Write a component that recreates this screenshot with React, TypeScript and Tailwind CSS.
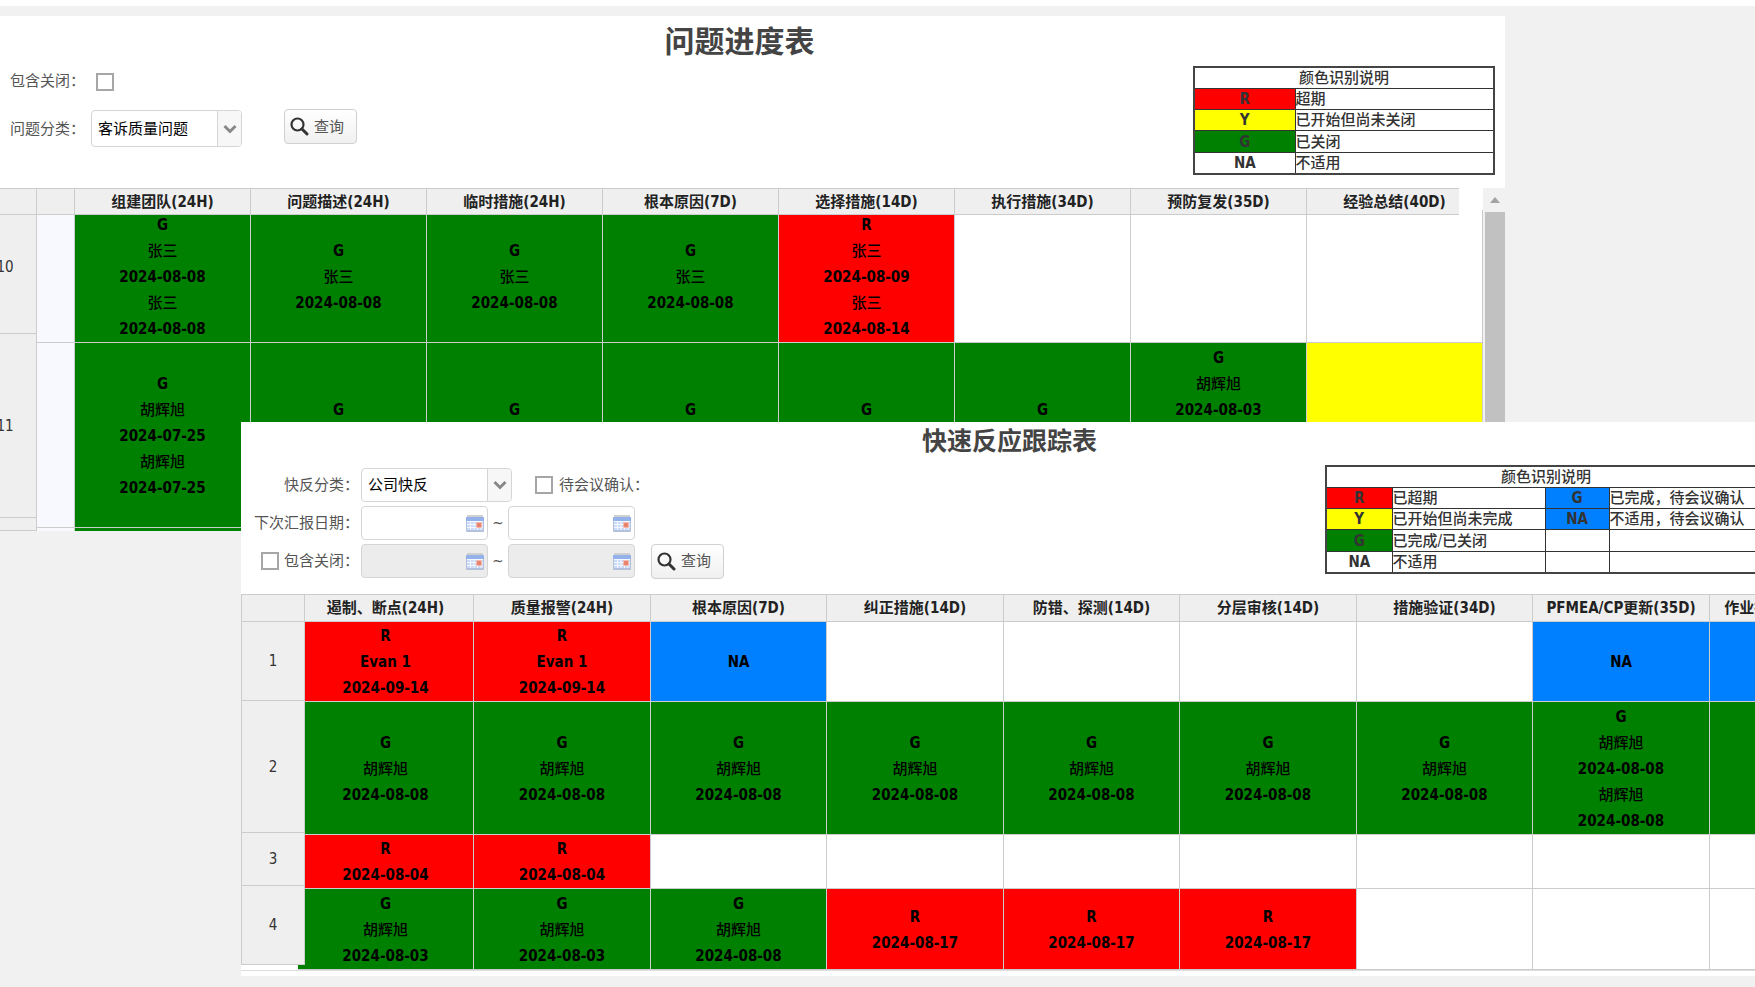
import React from "react";

type Status = "R" | "Y" | "G" | "B" | "";

interface CellData {
  status: Status;
  lines: string[];
}

interface RowData {
  height: string;
  cells: CellData[];
}

const statusColor: Record<Status, string> = {
  R: "bg-[#ff0000]",
  Y: "bg-[#ffff00]",
  G: "bg-[#008000]",
  B: "bg-[#0080ff]",
  "": "bg-white",
};

const empty: CellData = { status: "", lines: [] };

const cell = (status: Status, ...lines: string[]): CellData => ({
  status,
  lines,
});

const issueColumns = [
  "组建团队(24H)",
  "问题描述(24H)",
  "临时措施(24H)",
  "根本原因(7D)",
  "选择措施(14D)",
  "执行措施(34D)",
  "预防复发(35D)",
  "经验总结(40D)",
];

const zhang = cell("G", "G", "张三", "2024-08-08");
const hu = cell("G", "G", "胡辉旭", "2024-08-08");
const huTwice = cell("G", "G", "胡辉旭", "2024-07-25", "胡辉旭", "2024-07-25");
// name and date not filled in, the lines keep their room
const codeOnly = cell("G", "G", "", "");

const issueRows: RowData[] = [
  {
    height: "h-[133px]",
    cells: [
      cell("G", "G", "张三", "2024-08-08", "张三", "2024-08-08"),
      zhang,
      zhang,
      zhang,
      cell("R", "R", "张三", "2024-08-09", "张三", "2024-08-14"),
      empty,
      empty,
      empty,
    ],
  },
  {
    height: "h-[185px]",
    cells: [
      huTwice,
      codeOnly,
      codeOnly,
      codeOnly,
      codeOnly,
      codeOnly,
      cell("G", "G", "胡辉旭", "2024-08-03", "", "", "", ""),
      cell("Y"),
    ],
  },
  {
    height: "h-[4px]",
    cells: Array.from({ length: 8 }, () => cell("G")),
  },
];

const trackColumns = [
  "遏制、断点(24H)",
  "质量报警(24H)",
  "根本原因(7D)",
  "纠正措施(14D)",
  "防错、探测(14D)",
  "分层审核(14D)",
  "措施验证(34D)",
  "PFMEA/CP更新(35D)",
  "作业指导书更新(35D)",
];

const trackColumnWidths = [
  "w-[176px]",
  "w-[177px]",
  "w-[176px]",
  "w-[177px]",
  "w-[176px]",
  "w-[177px]",
  "w-[176px]",
  "w-[177px]",
  "w-[177px]",
];

const evan = cell("R", "R", "Evan 1", "2024-09-14");
const overdue = cell("R", "R", "2024-08-17");

const trackRows: RowData[] = [
  {
    height: "h-[80px]",
    cells: [
      evan,
      evan,
      cell("B", "NA"),
      empty,
      empty,
      empty,
      empty,
      cell("B", "NA"),
      cell("B", "NA"),
    ],
  },
  {
    height: "h-[133px]",
    cells: [
      hu,
      hu,
      hu,
      hu,
      hu,
      hu,
      hu,
      cell("G", "G", "胡辉旭", "2024-08-08", "胡辉旭", "2024-08-08"),
      hu,
    ],
  },
  {
    height: "h-[54px]",
    cells: [
      cell("R", "R", "2024-08-04"),
      cell("R", "R", "2024-08-04"),
      empty,
      empty,
      empty,
      empty,
      empty,
      empty,
      empty,
    ],
  },
  {
    height: "h-[81px]",
    cells: [
      cell("G", "G", "胡辉旭", "2024-08-03"),
      cell("G", "G", "胡辉旭", "2024-08-03"),
      hu,
      overdue,
      overdue,
      overdue,
      empty,
      empty,
      empty,
    ],
  },
];

const headCell =
  "h-[27px] border-r border-b border-[#ccc] bg-[#efefef] p-0 text-center font-bold whitespace-nowrap text-[#222]";

function BodyCell({ data }: { data: CellData }) {
  return (
    <td
      className={`border-r border-b border-[#ccc] p-0 pt-px text-center align-middle leading-[26px] font-bold text-black ${statusColor[data.status]}`}
    >
      {data.lines.map((line, index) => (
        <div
          key={index}
          className={`h-[26px] ${
            /[\u4e00-\u9fff]/.test(line) ? "font-medium" : ""
          }`}
        >
          {line}
        </div>
      ))}
    </td>
  );
}

function SearchButton() {
  return (
    <button className="flex h-[35px] w-[73px] items-center gap-[5px] rounded border border-[#d0d0d0] bg-linear-to-b from-white to-[#f0f0f0] pl-[5px] text-[#555]">
      <svg width="19" height="19" viewBox="0 0 19 19" fill="none">
        <circle cx="7.5" cy="7.5" r="6" stroke="#333" strokeWidth="2.2" />
        <path
          d="M12 12l5 5"
          stroke="#333"
          strokeWidth="3"
          strokeLinecap="round"
        />
      </svg>
      查询
    </button>
  );
}

function Select({
  id,
  value,
  className,
}: {
  id: string;
  value: string;
  className: string;
}) {
  return (
    <div
      className={`relative flex w-[151px] overflow-hidden rounded border border-[#d5d5d5] bg-white ${className}`}
    >
      <select
        id={id}
        className="w-full appearance-none bg-transparent pl-[6px] text-black"
      >
        <option>{value}</option>
      </select>
      <span className="pointer-events-none flex w-6 shrink-0 items-center justify-center border-l border-[#d5d5d5] bg-[#f7f7f7]">
        <svg width="14" height="10" viewBox="0 0 14 10" fill="none">
          <path d="M1.5 2L7 7.5L12.5 2" stroke="#888" strokeWidth="3" />
        </svg>
      </span>
    </div>
  );
}

function CalendarIcon() {
  return (
    <svg
      width="18"
      height="17"
      viewBox="0 0 18 17"
      className="pointer-events-none shrink-0"
    >
      <path d="M1 1h16" stroke="#cfcfcf" strokeWidth="2" />
      <rect x="0" y="2" width="18" height="15" rx="1" fill="#b3c1dd" />
      <rect x="0" y="2" width="18" height="4" fill="#93b1ea" />
      <rect x="1" y="6" width="16" height="9" fill="#c9d9f6" />
      <path
        d="M1 6.500h16M1 9.500h16M1 12.500h16M4.500 6v9M8 6v9M11.500 6v9M15 6v9"
        stroke="#f3f7ff"
        strokeWidth="1"
      />
      <rect x="10" y="7" width="6" height="6" rx="1" fill="#f3b9ac" />
      <rect x="11" y="8" width="4" height="4" rx="1" fill="#e9826c" />
    </svg>
  );
}

function DateInput({ label, disabled }: { label: string; disabled?: boolean }) {
  return (
    <div
      className={`flex h-[34px] w-[127px] items-center rounded border border-[#d5d5d5] pr-[3px] ${
        disabled ? "bg-[#ececec]" : "bg-white"
      }`}
    >
      <input
        type="text"
        aria-label={label}
        disabled={disabled}
        className="min-w-0 flex-1 bg-transparent pl-2"
      />
      <CalendarIcon />
    </div>
  );
}

function Checkbox({ id }: { id: string }) {
  return (
    <input
      type="checkbox"
      id={id}
      className="size-[18px] shrink-0 appearance-none border-2 border-[#a6a6a6] bg-white"
    />
  );
}

const legendCell = "border border-[#333] p-0 pt-px leading-[19px]";

function IssueLegend() {
  const items = [
    { color: "bg-[#ff0000]", code: "R", text: "超期" },
    { color: "bg-[#ffff00]", code: "Y", text: "已开始但尚未关闭" },
    { color: "bg-[#008000]", code: "G", text: "已关闭" },
    { color: "bg-white", code: "NA", text: "不适用" },
  ];
  return (
    <table className="h-[109px] w-[302px] table-fixed border-collapse border-2 border-[#444] text-[#333]">
      <colgroup>
        <col className="w-[101px]" />
        <col />
      </colgroup>
      <thead>
        <tr>
          <th colSpan={2} className={`${legendCell} font-medium`}>
            颜色识别说明
          </th>
        </tr>
      </thead>
      <tbody>
        {items.map((item) => (
          <tr key={item.code}>
            <td
              className={`${legendCell} text-center font-bold ${item.color}`}
            >
              {item.code}
            </td>
            <td className={`${legendCell} font-medium`}>{item.text}</td>
          </tr>
        ))}
      </tbody>
    </table>
  );
}

function TrackLegend() {
  const items = [
    ["bg-[#ff0000]", "R", "已超期", "bg-[#0080ff]", "G", "已完成，待会议确认"],
    [
      "bg-[#ffff00]",
      "Y",
      "已开始但尚未完成",
      "bg-[#0080ff]",
      "NA",
      "不适用，待会议确认",
    ],
    ["bg-[#008000]", "G", "已完成/已关闭", "", "", ""],
    ["bg-white", "NA", "不适用", "", "", ""],
  ];
  return (
    <table className="h-[109px] w-[442px] shrink-0 table-fixed border-collapse border-2 border-[#444] text-[#333]">
      <colgroup>
        <col className="w-[66px]" />
        <col className="w-[153px]" />
        <col className="w-[64px]" />
        <col />
      </colgroup>
      <thead>
        <tr>
          <th colSpan={4} className={`${legendCell} font-medium`}>
            颜色识别说明
          </th>
        </tr>
      </thead>
      <tbody>
        {items.map(([color, code, text, color2, code2, text2]) => (
          <tr key={code}>
            <td className={`${legendCell} text-center font-bold ${color}`}>
              {code}
            </td>
            <td className={`${legendCell} font-medium`}>{text}</td>
            <td className={`${legendCell} text-center font-bold ${color2}`}>
              {code2}
            </td>
            <td className={`${legendCell} font-medium whitespace-nowrap`}>
              {text2}
            </td>
          </tr>
        ))}
      </tbody>
    </table>
  );
}

function IssueProgress() {
  const numbers = [
    { height: "h-[133px]", text: "10" },
    { height: "h-[184px]", text: "11" },
    { height: "h-[13px]", text: "" },
  ];
  return (
    <section className="mr-[250px] h-[515px] overflow-hidden bg-white">
      <h1 className="pt-1 pr-[26px] text-center text-[30px] leading-[44px] font-bold text-[#444]">
        问题进度表
      </h1>
      <div className="flex h-[124px] justify-between px-[10px]">
        <div className="flex flex-col">
          <div className="mt-[7px] flex h-[20px] items-end">
            <label htmlFor="issue-closed" className="w-[86px]">
              包含关闭：
            </label>
            <Checkbox id="issue-closed" />
          </div>
          <div className="mt-[19px] flex h-[37px] items-center">
            <label htmlFor="issue-type" className="w-[81px]">
              问题分类：
            </label>
            <Select id="issue-type" value="客诉质量问题" className="h-[37px]" />
            <div className="-mt-1 ml-[42px]">
              <SearchButton />
            </div>
          </div>
        </div>
        <div className="mt-[2px]">
          <IssueLegend />
        </div>
      </div>
      <div className="flex h-[343px] overflow-hidden">
        {/* frozen row numbers */}
        <div className="w-[37px] shrink-0 overflow-hidden">
          <div className="relative z-10 -mb-[14px] h-[27px] border-t border-r border-b border-[#ccc] bg-[#efefef]" />
          <table className="-ml-[26px] w-[63px] table-fixed border-separate border-spacing-0">
            <tbody>
              {numbers.map((row, index) => (
                <tr key={index} className={row.height}>
                  <td className="border-r border-b border-[#ccc] bg-[#efefef] p-0 text-center text-[#333]">
                    {row.text}
                  </td>
                </tr>
              ))}
            </tbody>
          </table>
        </div>
        <div className="min-w-0 flex-1">
          <div className="relative z-10 mr-6 -mb-[5px] overflow-hidden">
            <table className="-mr-6 w-[calc(100%+24px)] table-fixed border-separate border-spacing-0">
              <thead>
                <tr>
                  <th className={`${headCell} w-[38px] border-t`} />
                  {issueColumns.map((name) => (
                    <th key={name} className={`${headCell} border-t`}>
                      {name}
                    </th>
                  ))}
                </tr>
              </thead>
            </table>
          </div>
          <table className="w-full table-fixed border-separate border-spacing-0">
            <colgroup>
              <col className="w-[38px]" />
              <col span={8} />
            </colgroup>
            <tbody>
              {issueRows.map((row, index) => (
                <tr key={index} className={row.height}>
                  <td className="border-r border-b border-[#ccc] bg-[#f8f8ff] p-0" />
                  {row.cells.map((data, i) => (
                    <BodyCell key={i} data={data} />
                  ))}
                </tr>
              ))}
            </tbody>
          </table>
        </div>
        <div className="flex w-[22px] shrink-0 flex-col items-end bg-[#f1f1f1]">
          <div className="flex h-[24px] w-5 items-center justify-center">
            <svg width="10" height="6" viewBox="0 0 10 6">
              <path d="M5 0l5 6H0z" fill="#a3a3a3" />
            </svg>
          </div>
          <div className="w-5 flex-1 bg-[#c1c1c1]" />
        </div>
      </div>
    </section>
  );
}

function QuickResponse() {
  const numbers = [
    { height: "h-[79px]", text: "1" },
    { height: "h-[132px]", text: "2" },
    { height: "h-[53px]", text: "3" },
    { height: "h-[79px]", text: "4" },
  ];
  return (
    <section className="relative z-20 -mt-[109px] ml-[241px] overflow-hidden bg-white pb-[5px]">
      <h2 className="pl-[23px] text-center text-[25px] leading-[40px] font-bold text-[#444]">
        快速反应跟踪表
      </h2>
      <div className="flex h-[132px] justify-between">
        <div className="flex flex-col gap-[4px] pt-[6px]">
          <div className="flex h-[34px] items-center">
            <label
              htmlFor="track-type"
              className="w-[120px] pl-[43px] whitespace-nowrap"
            >
              快反分类：
            </label>
            <Select id="track-type" value="公司快反" className="h-[34px]" />
            <span className="ml-[23px] flex items-center gap-[6px]">
              <Checkbox id="track-meeting" />
              <label htmlFor="track-meeting">待会议确认：</label>
            </span>
          </div>
          <div className="flex h-[34px] items-center">
            <span className="w-[120px] pl-[13px] whitespace-nowrap">
              下次汇报日期：
            </span>
            <DateInput label="下次汇报日期开始" />
            <span className="w-[20px] text-center">~</span>
            <DateInput label="下次汇报日期结束" />
          </div>
          <div className="flex h-[34px] items-center">
            <div className="flex w-[120px] items-center gap-[5px] pl-[20px] whitespace-nowrap">
              <Checkbox id="track-closed" />
              <label htmlFor="track-closed">包含关闭：</label>
            </div>
            <DateInput label="关闭日期开始" disabled />
            <span className="w-[20px] text-center">~</span>
            <DateInput label="关闭日期结束" disabled />
            <div className="ml-4">
              <SearchButton />
            </div>
          </div>
        </div>
        <div className="-mr-[12px] pt-[3px]">
          <TrackLegend />
        </div>
      </div>
      <div className="flex items-start overflow-hidden border-b border-[#ddd]">
        {/* frozen row numbers, lying over the edge of the scrolled body */}
        <table className="relative z-10 -mr-[7px] w-[64px] shrink-0 table-fixed border-separate border-spacing-0 border-t border-l border-[#ccc]">
          <thead>
            <tr>
              <th className={headCell} />
            </tr>
          </thead>
          <tbody>
            {numbers.map((row) => (
              <tr key={row.text} className={row.height}>
                <td className="border-r border-b border-[#ccc] bg-[#efefef] p-0 text-center text-[#333]">
                  {row.text}
                </td>
              </tr>
            ))}
          </tbody>
        </table>
        <table className="w-[1589px] shrink-0 table-fixed border-separate border-spacing-0 border-t border-[#ccc]">
          <thead>
            <tr>
              {trackColumns.map((name, index) => (
                <th
                  key={name}
                  className={`${headCell} ${trackColumnWidths[index]}`}
                >
                  {name}
                </th>
              ))}
            </tr>
          </thead>
          <tbody>
            {trackRows.map((row, index) => (
              <tr key={index} className={row.height}>
                {row.cells.map((data, i) => (
                  <BodyCell key={i} data={data} />
                ))}
              </tr>
            ))}
          </tbody>
        </table>
      </div>
    </section>
  );
}

export default function App() {
  return (
    <main className="min-h-screen overflow-hidden border-t-[6px] border-white bg-[#f1f1f1] pt-[10px] font-['DejaVu_Sans_Condensed','Noto_Sans_CJK_SC',sans-serif] text-[15px] leading-5 text-[#555]">
      <IssueProgress />
      <QuickResponse />
    </main>
  );
}
